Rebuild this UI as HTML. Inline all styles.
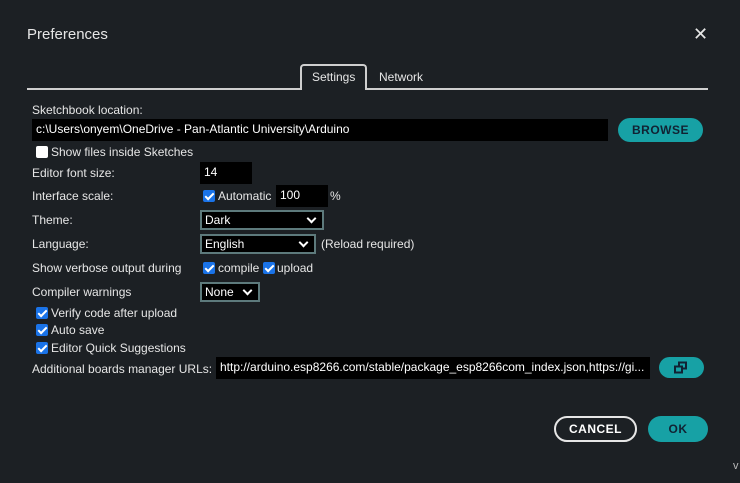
<!DOCTYPE html>
<html><head><meta charset="utf-8"><style>
*{box-sizing:border-box;margin:0;padding:0}
body{width:740px;height:483px;background:#1c2024;font-family:"Liberation Sans",sans-serif;color:#e6e6e6;font-size:12px;position:relative;overflow:hidden}
.a{position:absolute;white-space:nowrap}
.lbl{line-height:14px}
.inp{background:#000;color:#fff;padding-left:4px;line-height:21px}
.sel{background:#000;border:2px solid #5d7a7c;color:#fff;padding-left:3px;line-height:16px}
.sel:after{content:"";position:absolute;right:7px;top:3px;width:5px;height:5px;border-right:2px solid #fff;border-bottom:2px solid #fff;transform:rotate(45deg)}
.cb{width:12px;height:12px;background:#1a73e8;border-radius:2px}
.cb:after{content:"";position:absolute;left:4px;top:1px;width:3px;height:7px;border-right:2px solid #fff;border-bottom:2px solid #fff;transform:rotate(45deg)}
.btn{border-radius:13px;font-weight:bold;text-align:center;letter-spacing:.5px}
</style></head><body>
<div class="a" style="left:27px;top:26px;font-size:15px">Preferences</div>
<div class="a" style="left:693px;top:24px;font-size:18px">✕</div>
<div class="a" style="left:27px;top:88px;width:681px;height:2px;background:#cfcfcf"></div>
<div class="a" style="left:300px;top:64px;width:67px;height:26px;border:2px solid #cfcfcf;border-bottom:none;border-radius:4px 4px 0 0;background:#1c2024"></div>
<div class="a lbl" style="left:312px;top:70px">Settings</div>
<div class="a lbl" style="left:379px;top:70px">Network</div>
<div class="a lbl" style="left:32px;top:103px">Sketchbook location:</div>
<div class="a inp" style="left:32px;top:119px;width:576px;height:22px">c:\Users\onyem\OneDrive - Pan-Atlantic University\Arduino</div>
<div class="a btn" style="left:618px;top:118px;width:85px;height:24px;background:#17a1a5;color:#123;line-height:24px">BROWSE</div>
<div class="a" style="left:36px;top:146px;width:12px;height:12px;background:#fff;border-radius:2px"></div>
<div class="a lbl" style="left:51px;top:145px">Show files inside Sketches</div>
<div class="a lbl" style="left:32px;top:166px">Editor font size:</div>
<div class="a inp" style="left:200px;top:162px;width:52px;height:22px">14</div>
<div class="a lbl" style="left:32px;top:189px">Interface scale:</div>
<div class="a cb" style="left:203px;top:190px"></div>
<div class="a lbl" style="left:218px;top:189px">Automatic</div>
<div class="a inp" style="left:276px;top:185px;width:52px;height:22px">100</div>
<div class="a lbl" style="left:330px;top:189px">%</div>
<div class="a lbl" style="left:32px;top:213px">Theme:</div>
<div class="a sel" style="left:200px;top:210px;width:124px;height:20px">Dark</div>
<div class="a lbl" style="left:32px;top:237px">Language:</div>
<div class="a sel" style="left:200px;top:234px;width:116px;height:20px">English</div>
<div class="a lbl" style="left:321px;top:237px">(Reload required)</div>
<div class="a lbl" style="left:32px;top:261px">Show verbose output during</div>
<div class="a cb" style="left:203px;top:262px"></div>
<div class="a lbl" style="left:218px;top:261px">compile</div>
<div class="a cb" style="left:263px;top:262px"></div>
<div class="a lbl" style="left:277px;top:261px">upload</div>
<div class="a lbl" style="left:32px;top:285px">Compiler warnings</div>
<div class="a sel" style="left:200px;top:282px;width:60px;height:20px">None</div>
<div class="a cb" style="left:36px;top:307px"></div>
<div class="a lbl" style="left:51px;top:306px">Verify code after upload</div>
<div class="a cb" style="left:36px;top:324px"></div>
<div class="a lbl" style="left:51px;top:323px">Auto save</div>
<div class="a cb" style="left:36px;top:342px"></div>
<div class="a lbl" style="left:51px;top:341px">Editor Quick Suggestions</div>
<div class="a lbl" style="left:32px;top:362px">Additional boards manager URLs:</div>
<div class="a inp" style="left:216px;top:357px;width:434px;height:22px">http://arduino.esp8266.com/stable/package_esp8266com_index.json,https://gi...</div>
<div class="a btn" style="left:659px;top:357px;width:45px;height:21px;background:#17a1a5"></div>
<svg class="a" style="left:673px;top:361px" width="16" height="13" viewBox="0 0 16 13"><rect x="6" y="1.5" width="7" height="6" fill="none" stroke="#123" stroke-width="2"/><rect x="2" y="5.5" width="7" height="6" fill="#17a1a5" stroke="#123" stroke-width="2"/></svg>
<div class="a btn" style="left:554px;top:416px;width:83px;height:26px;border:2px solid #e6e6e6;line-height:22px;color:#fff">CANCEL</div>
<div class="a btn" style="left:648px;top:416px;width:60px;height:26px;background:#17a1a5;color:#123;line-height:26px">OK</div>
<div class="a" style="left:733px;top:460px;font-size:11px;color:#bbb">v</div>
</body></html>
